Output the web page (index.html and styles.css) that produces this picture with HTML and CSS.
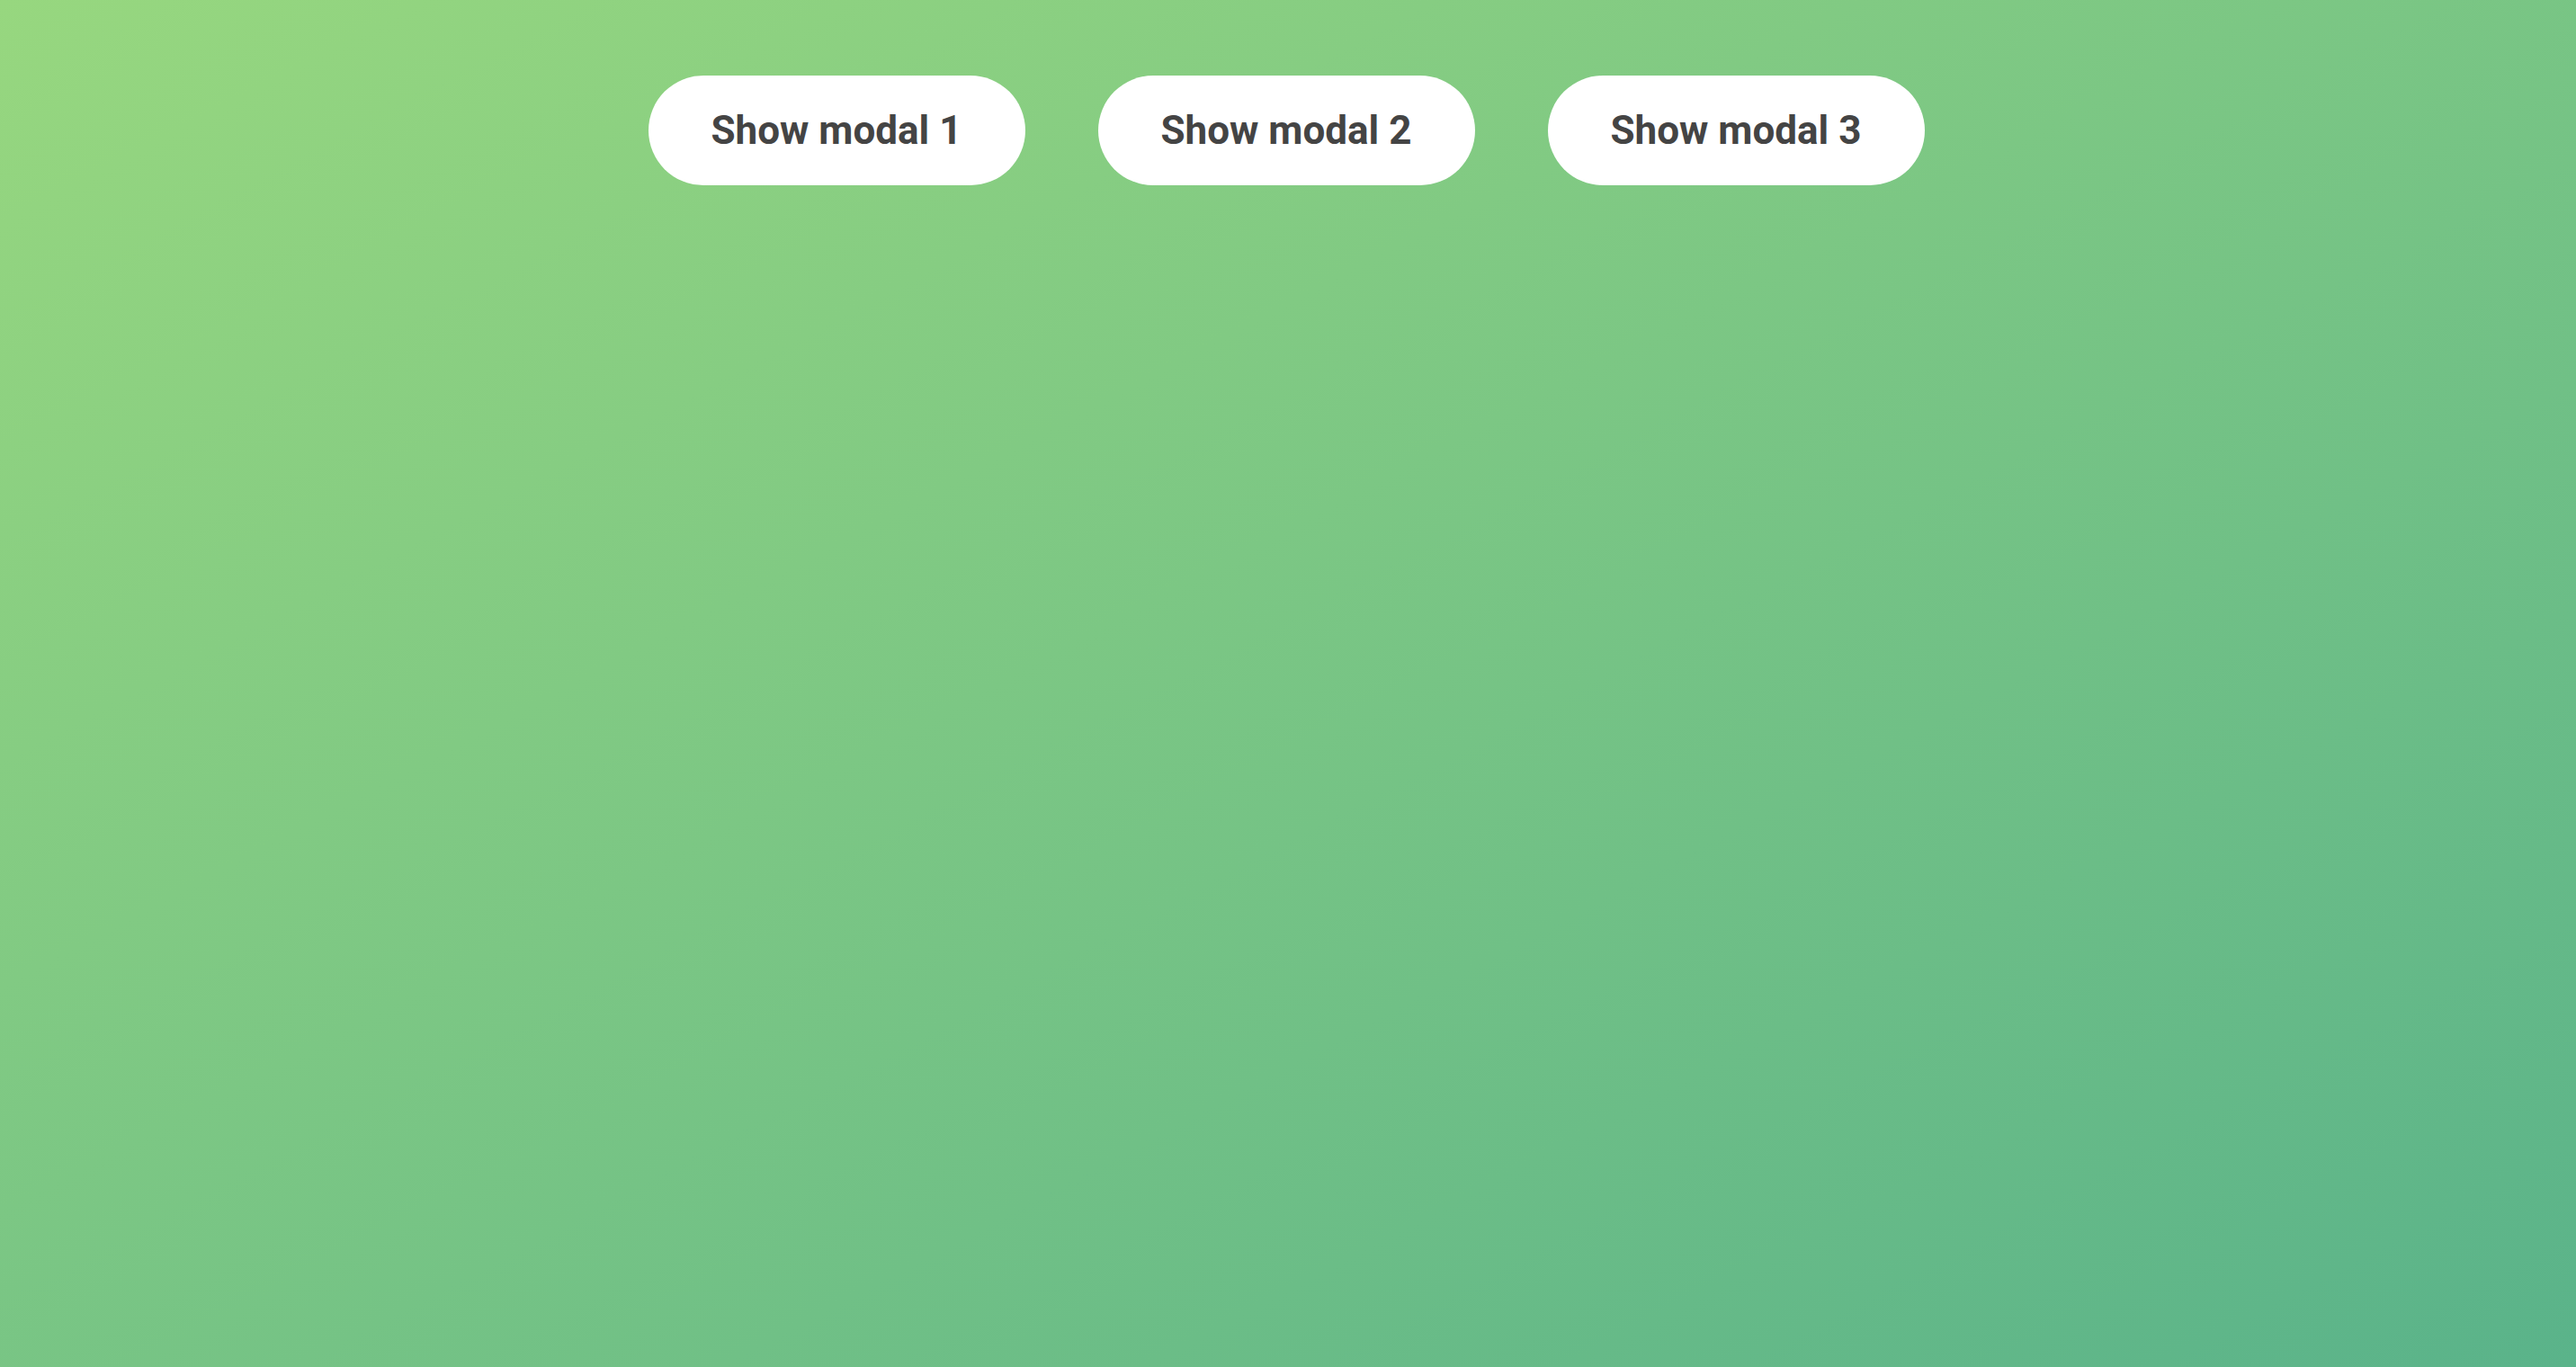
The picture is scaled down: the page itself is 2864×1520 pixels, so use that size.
FILE: index.html
```html
<!DOCTYPE html>
<html lang="en">
<head>
<meta charset="utf-8">
<title>Modals</title>
<link rel="stylesheet" href="styles.css">
</head>
<body>
<div class="bar">
  <button class="btn">Show modal 1</button>
  <button class="btn">Show modal 2</button>
  <button class="btn">Show modal 3</button>
</div>
</body>
</html>
```

FILE: styles.css
```css
html, body {
  margin: 0;
  height: 100%;
}
body {
  background: linear-gradient(to bottom right, #97d77f 0%, #5ab38a 100%);
  font-family: Roboto, "Noto Sans", sans-serif;
}
.bar {
  display: flex;
  justify-content: center;
  gap: 81px;
  padding-top: 84px;
  padding-right: 4px;
}
.btn {
  width: 419px;
  height: 122px;
  border: none;
  border-radius: 61px;
  background: #fff;
  color: #444;
  font-family: Roboto, "Noto Sans", sans-serif;
  font-weight: 700;
  font-size: 44px;
  cursor: pointer;
  padding: 0;
}
```
